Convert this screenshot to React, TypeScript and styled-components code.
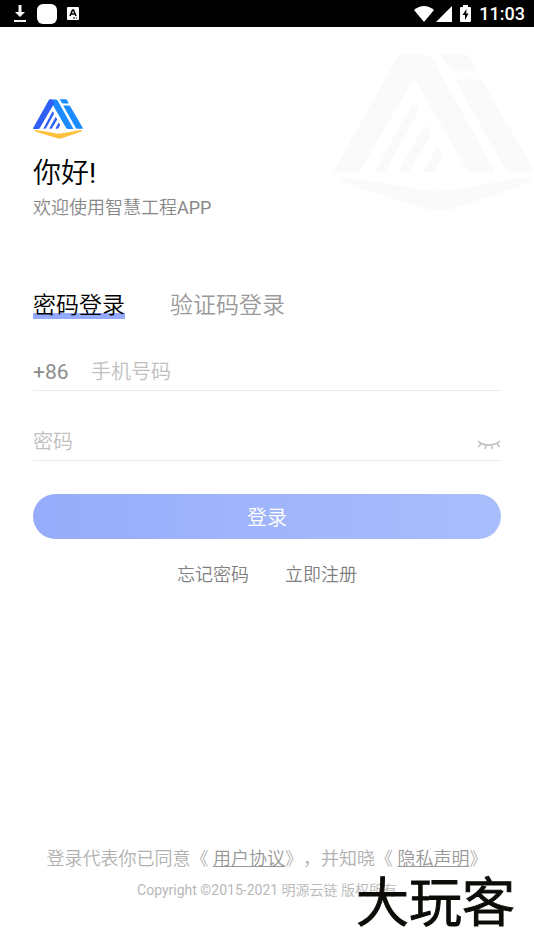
import React, { useState } from "react";
import styled, { createGlobalStyle } from "styled-components";

const GlobalStyle = createGlobalStyle`
  * { box-sizing: border-box; }
  body { margin: 0; background: #fff; }
  body, button, input { font-family: Roboto, "Noto Sans CJK SC", sans-serif; }
  button, input { font-weight: inherit; }
`;

const Screen = styled.div`
  position: relative;
  min-height: 100vh;
  display: flex;
  flex-direction: column;
  overflow: hidden;
  font-weight: 350;
`;

const StatusBar = styled.header`
  height: 27px;
  padding: 0 9px 0 11px;
  display: flex;
  align-items: center;
  justify-content: space-between;
  background: #000;
  color: #fff;
`;

const StatusGroup = styled.div<{ $gap: number }>`
  display: flex;
  align-items: center;
  gap: ${(p) => p.$gap}px;
`;

const Clock = styled.time`
  font-size: 18px;
  line-height: 24px;
  font-weight: 500;
`;

const Latin = styled.span`
  font-weight: 400;
`;

const Backdrop = styled.div`
  position: absolute;
  top: 54px;
  right: 0;
  line-height: 0;
`;

const Main = styled.main`
  position: relative;
  padding: 72px 33px 0;
`;

const Brand = styled.div`
  height: 40px;
`;

const Title = styled.h1`
  margin: 14px 0 0;
  font-size: 28px;
  line-height: 42px;
  font-weight: 350;
  color: #000;
`;

const Subtitle = styled.p`
  margin: 0;
  font-size: 18px;
  line-height: 26px;
  color: #888;
`;

const Tabs = styled.div`
  display: flex;
  gap: 45px;
  margin-top: 69px;
`;

const Tab = styled.button<{ $active: boolean }>`
  padding: 0;
  border: 0;
  font-size: 23px;
  line-height: 32px;
  color: ${(p) => (p.$active ? "#000" : "#999")};
  background: ${(p) =>
    p.$active
      ? "linear-gradient(#93aaff, #93aaff) 0 23px / 100% 6px no-repeat"
      : "none"};
  cursor: pointer;
`;

const Field = styled.label`
  display: flex;
  align-items: center;
  height: 38px;
  border-bottom: 1px solid #ebebeb;
`;

const Form = styled.form`
  margin-top: 31px;
  display: flex;
  flex-direction: column;
  gap: 32px;
`;

const Prefix = styled.span`
  width: 58px;
  font-size: 21px;
  font-weight: 400;
  color: #8c8c8c;
`;

const Input = styled.input`
  flex: 1;
  min-width: 0;
  padding: 0;
  border: 0;
  outline: 0;
  background: transparent;
  font-size: 20px;
  line-height: 30px;
  color: #333;
  &::placeholder { color: #c0c0c0; opacity: 1; }
`;

const IconButton = styled.button`
  padding: 6px 0 0;
  border: 0;
  background: none;
  line-height: 0;
  cursor: pointer;
`;

const Submit = styled.button`
  height: 45px;
  margin-top: 1px;
  padding: 2px 0 0;
  border: 0;
  border-radius: 23px;
  background: linear-gradient(90deg, #96acfb, #a9befc);
  color: #fff;
  font-size: 20px;
  line-height: 30px;
  cursor: pointer;
`;

const Links = styled.nav`
  display: flex;
  justify-content: center;
  gap: 36px;
  margin-top: 22px;
`;

const TextLink = styled.a`
  font-size: 18px;
  line-height: 28px;
  color: #808080;
  text-decoration: none;
`;

const Footer = styled.footer`
  margin-top: auto;
  padding-bottom: 50px;
  text-align: center;
  white-space: nowrap;
`;

const Agreement = styled.p`
  margin: 0 0 8px;
  font-size: 18px;
  line-height: 26px;
  color: #b0b0b0;
  text-spacing-trim: space-all;
`;

const PolicyLink = styled.a`
  color: #999;
  text-decoration: underline;
  text-decoration-thickness: 1px;
  text-underline-offset: 1px;
`;

const Copyright = styled.p`
  margin: 0;
  font-size: 14px;
  line-height: 20px;
  color: #b8b8b8;
`;

const SiteMark = styled.div`
  position: absolute;
  right: 19px;
  bottom: 21px;
  font-family: "Noto Sans CJK SC", sans-serif;
  font-size: 53px;
  line-height: 60px;
  font-weight: 350;
  color: #0c0b08;
  -webkit-text-stroke: 1px #0c0b08;
`;

function Logo({ width, height, mono }: { width: number; height: number; mono?: string }) {
  const dark = mono ?? "#2f5ff5";
  const light = mono ?? "#1b8bff";
  const gold = mono ?? "#fdc13c";
  return (
    <svg width={width} height={height} viewBox="28 42 600 474" aria-hidden="true">
      <path fill={light} d="M222 45H300Q315 45 325 60L509 390Q512 398 504 398H446Q434 398 424 384L268 115L240 162Z" />
      <path fill={dark} d="M230 45H262L290 78L268 115L114 380Q104 398 90 398H34Q26 396 30 388L218 52Q222 45 230 45Z" />
      <path fill={light} d="M355 43H424Q432 44 436 52L456 86Q458 94 448 94H392Q380 94 374 84L351 49Q350 44 355 43Z" />
      <path fill={light} d="M396 118H460Q470 118 476 128L626 387Q630 395 620 396H556Q546 394 540 384L393 124Q391 119 396 118Z" />
      <path fill={dark} d="M262 190Q267 184 271 194L279 208Q281 214 277 222L186 388Q182 396 174 396H158Q152 394 156 386Z" />
      <path fill={dark} d="M298 257Q301 253 304 259L316 278Q319 284 315 290L258 388Q254 396 246 396H228Q222 394 226 386Z" />
      <path fill={dark} d="M335 324Q338 320 341 326L352 344Q354 350 350 356L332 390Q328 396 322 396H302Q296 393 300 386Z" />
      <path fill={gold} d="M42 414Q42 410 54 412Q180 428 310 452Q345 456 385 450L600 412Q625 410 618 420Q600 436 560 448L380 508Q345 520 310 508L100 444Q60 432 42 414Z" />
    </svg>
  );
}

function DownloadIcon() {
  return (
    <svg width="16" height="18" viewBox="0 0 16 18" fill="#f4f4f4" aria-hidden="true">
      <path d="M7.500 0H10.500V7H14L9 12L4 7H7.500ZM3 15H15V17H3Z" />
    </svg>
  );
}

function AppIcon() {
  return (
    <svg width="20" height="20" viewBox="0 0 20 20" aria-hidden="true">
      <rect width="20" height="20" rx="6" fill="#fff" />
    </svg>
  );
}

function KeyboardIcon() {
  return (
    <svg width="12" height="13" viewBox="0 0 12 13" aria-hidden="true">
      <rect width="12" height="13" rx="1" fill="#fff" />
      <path d="M3 9L5.5 3H6.5L9 9M4 7H8" fill="none" stroke="#000" strokeWidth="1.6" />
      <path d="M6 11H8M9 11H10" stroke="#000" />
    </svg>
  );
}

function WifiIcon() {
  return (
    <svg width="20" height="16" viewBox="0 0 20 16" aria-hidden="true">
      <path d="M0 4Q10-4 20 4L10 16Z" fill="#fff" />
    </svg>
  );
}

function SignalIcon() {
  return (
    <svg width="16" height="16" viewBox="0 0 16 16" aria-hidden="true">
      <path d="M16 0V16H0Z" fill="#fff" />
    </svg>
  );
}

function BatteryIcon() {
  return (
    <svg width="11" height="17" viewBox="0 0 11 17" aria-hidden="true">
      <path d="M3 0H8V2H10Q11 2 11 3V16Q11 17 10 17H1Q0 17 0 16V3Q0 2 1 2H3Z" fill="#fff" />
      <path d="M6.5 4L2.5 10H5V15L8.5 8.5H6.2Z" fill="#000" />
    </svg>
  );
}

function ClosedEyeIcon() {
  return (
    <svg width="24" height="10" viewBox="0 0 24 10" fill="none" stroke="#bcbcbc" strokeWidth="1.4" aria-hidden="true">
      <path d="M1 1Q5 5 12 5Q19 5 23 1M4 3.5L1.5 7M9 5L8 9M14.5 5L15.5 9M20 3.5L22.5 7" />
    </svg>
  );
}

export default function App() {
  const [mode, setMode] = useState<"password" | "code">("password");

  return (
    <>
      <GlobalStyle />
      <Screen lang="zh-CN">
        <StatusBar>
          <StatusGroup $gap={10}>
            <DownloadIcon />
            <AppIcon />
            <KeyboardIcon />
          </StatusGroup>
          <StatusGroup $gap={8}>
            <StatusGroup $gap={2}>
              <WifiIcon />
              <SignalIcon />
            </StatusGroup>
            <BatteryIcon />
            <Clock>11:03</Clock>
          </StatusGroup>
        </StatusBar>
        <Backdrop>
          <Logo width={200} height={158} mono="#fafafa" />
        </Backdrop>
        <Main>
          <Brand>
            <Logo width={50} height={40} />
          </Brand>
          <Title>
            你好<Latin>!</Latin>
          </Title>
          <Subtitle>
            欢迎使用智慧工程<Latin>APP</Latin>
          </Subtitle>
          <Tabs role="tablist">
            <Tab role="tab" type="button" aria-selected={mode === "password"} $active={mode === "password"} onClick={() => setMode("password")}>
              密码登录
            </Tab>
            <Tab role="tab" type="button" aria-selected={mode === "code"} $active={mode === "code"} onClick={() => setMode("code")}>
              验证码登录
            </Tab>
          </Tabs>
          <Form onSubmit={(e) => e.preventDefault()}>
            <Field>
              <Prefix>+86</Prefix>
              <Input type="tel" placeholder="手机号码" aria-label="手机号码" />
            </Field>
            <Field>
              <Input type="password" placeholder="密码" aria-label="密码" />
              <IconButton type="button" aria-label="显示密码">
                <ClosedEyeIcon />
              </IconButton>
            </Field>
            <Submit type="submit">登录</Submit>
          </Form>
          <Links>
            <TextLink href="#forgot">忘记密码</TextLink>
            <TextLink href="#register">立即注册</TextLink>
          </Links>
        </Main>
        <Footer>
          <Agreement>
            登录代表你已同意《 <PolicyLink href="#terms">用户协议</PolicyLink>》，并知晓《 <PolicyLink href="#privacy">隐私声明</PolicyLink>》
          </Agreement>
          <Copyright>
            <Latin>Copyright ©2015-2021</Latin> 明源云链 版权所有
          </Copyright>
        </Footer>
        <SiteMark>大玩客</SiteMark>
      </Screen>
    </>
  );
}
